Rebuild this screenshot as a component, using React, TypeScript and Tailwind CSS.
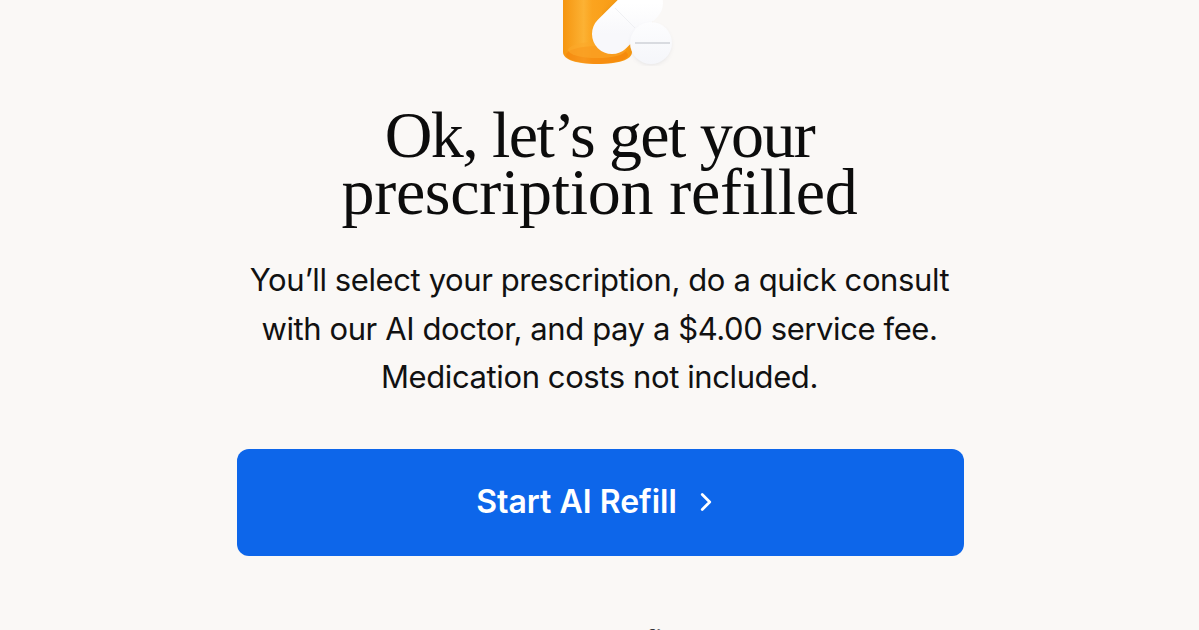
import { ChevronRight } from "lucide-react";

function PillIcon() {
  // viewBox uses the page's own x coords so the shapes are easy to check
  return (
    <svg width="140" height="70" viewBox="540 0 140 70" className="block">
      <defs>
        <linearGradient id="bottle" x1="0" x2="1" y1="0" y2="0">
          <stop offset="0" stopColor="#f5950f" />
          <stop offset="0.3" stopColor="#fcb234" />
          <stop offset="0.42" stopColor="#fba41f" />
          <stop offset="1" stopColor="#f7970f" />
        </linearGradient>
        <linearGradient id="capsule" x1="0" x2="0" y1="0" y2="1">
          <stop offset="0" stopColor="#ffffff" />
          <stop offset="1" stopColor="#f8f8fb" />
        </linearGradient>
        <linearGradient id="tablet" x1="0" x2="0" y1="0" y2="1">
          <stop offset="0" stopColor="#fdfdfe" />
          <stop offset="1" stopColor="#f5f6fa" />
        </linearGradient>
        <filter id="soft" x="-30%" y="-30%" width="160%" height="160%">
          <feGaussianBlur stdDeviation="2" />
        </filter>
      </defs>
      <path d="M563 -2H632V52C632 60 618 64 597 64C577 64 563 60 563 52Z" fill="url(#bottle)" />
      <ellipse cx="597" cy="55" rx="31" ry="9" fill="#f4800a" opacity="0.55" />
      <ellipse cx="597" cy="50" rx="29" ry="8" fill="#fba92a" opacity="0.6" />
      <path d="M612 34L643 3" stroke="#b86a10" strokeOpacity="0.25" strokeWidth="40" strokeLinecap="round" filter="url(#soft)" />
      <path d="M612 34L643 3" stroke="url(#capsule)" strokeWidth="40" strokeLinecap="round" />
      <path d="M615 8L635 28" stroke="#eff0f3" strokeWidth="1" />
      <circle cx="651" cy="45" r="20" fill="#6b7080" opacity="0.14" filter="url(#soft)" />
      <circle cx="651" cy="43" r="21" fill="url(#tablet)" />
      <rect x="635" y="42" width="35" height="2" fill="#d9dbe0" />
    </svg>
  );
}

export default function App() {
  return (
    <div className="h-[630px] w-full overflow-hidden bg-[#faf8f6] font-['Inter',sans-serif] text-[#111111]">
      <div className="flex flex-col items-center">
        <div className="ml-[21px] h-[66px] overflow-hidden">
          <PillIcon />
        </div>
        <h1 className="mt-[40px] text-center font-['Liberation_Serif',serif] text-[66px] leading-[57px] text-[#0c0c0c]">
          <span className="tracking-[-1.6px]">Ok, let’s get your</span>
          <br />
          <span className="tracking-[-0.3px]">prescription refilled</span>
        </h1>
        <p className="mt-[36px] whitespace-nowrap text-center text-[31px] leading-[48.5px] tracking-[-0.4px]">
          You’ll select your prescription, do a quick consult
          <br />
          with our AI doctor, and pay a $4.00 service fee.
          <br />
          Medication costs not included.
        </p>
        <button className="ml-[1px] mt-[47px] flex h-[107px] w-[727px] items-center justify-center gap-[14px] rounded-[12px] bg-[#0d66ea] pr-[3px] text-[32px] font-semibold text-white">
          Start AI Refill
          <ChevronRight size={30} strokeWidth={2.2} />
        </button>
        <p className="mt-[68px] text-center text-[28px] leading-[34px] text-[#333333]">How does AI Refill work?</p>
      </div>
    </div>
  );
}
